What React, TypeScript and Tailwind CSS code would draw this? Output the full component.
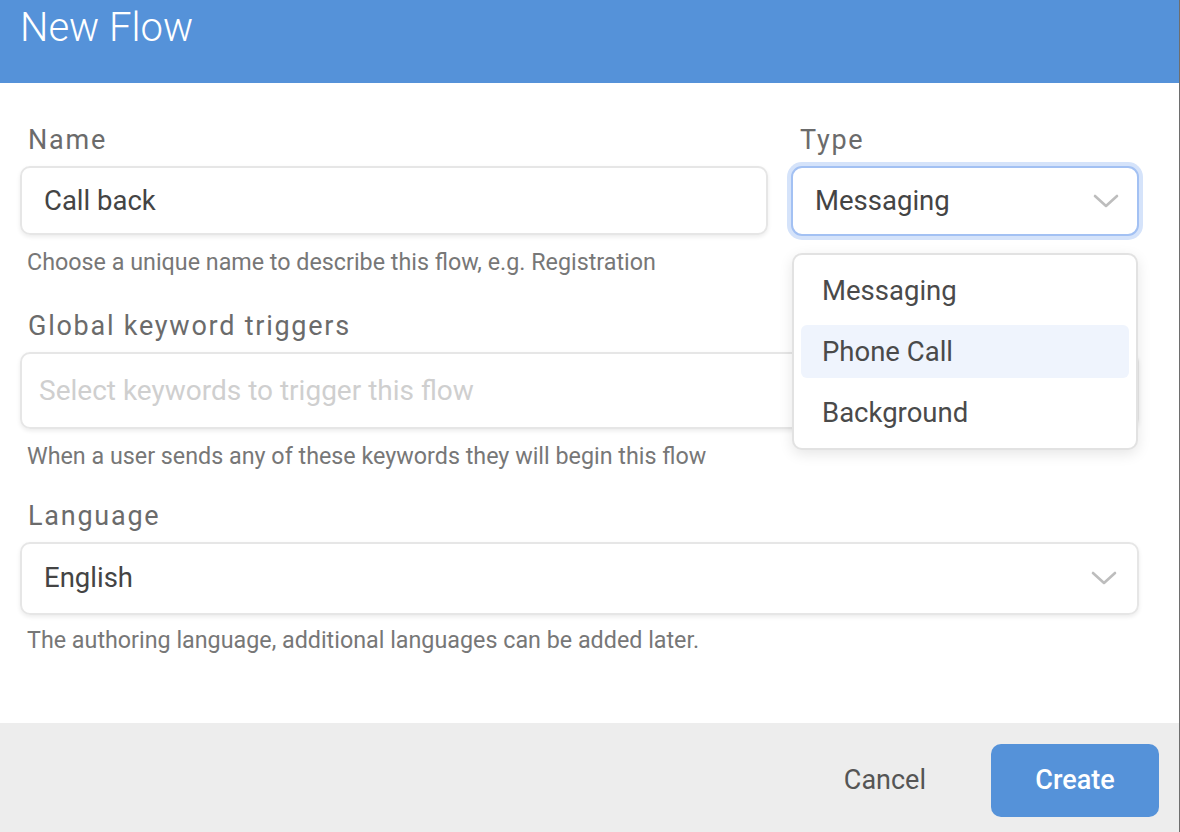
const font = { fontFamily: 'Roboto, "Liberation Sans", sans-serif' }

function Chevron() {
  return (
    <svg width="26" height="16" viewBox="0 0 26 16" fill="none">
      <polyline points="2,3 13,13 24,3" stroke="#bdbdbd" strokeWidth="2.6" strokeLinecap="round" strokeLinejoin="round" />
    </svg>
  )
}

function Label({ children }: { children: React.ReactNode }) {
  return <div className="pl-[8px] text-[27px] tracking-[0.065em] text-[#6b6b6b] leading-none">{children}</div>
}

function Help({ children }: { children: React.ReactNode }) {
  return <div className="pl-[7px] text-[23.3px] text-[#777] leading-none">{children}</div>
}

export default function App() {
  const options = ['Messaging', 'Phone Call', 'Background']
  return (
    <div className="w-[1180px] h-[832px] flex flex-col bg-white border-r border-[#6e6e6e] overflow-hidden" style={font}>
      <div className="h-[83px] shrink-0 bg-[#5592d9] pl-[20px] pt-[6px]">
        <div className="text-[40px] font-light text-white leading-[44px]">New Flow</div>
      </div>

      <div className="flex-1 px-[20px] pr-[40px] pt-[44px]">
        <div className="flex gap-[23px]">
          <div className="w-[748px] flex flex-col">
            <Label>Name</Label>
            <div className="mt-[12px] h-[69px] rounded-[10px] border-2 border-[#e6e6e6] shadow-[0_2px_4px_rgba(0,0,0,0.08)] flex items-center pl-[22px] text-[27.5px] text-[#444]">
              Call back
            </div>
            <div className="mt-[16px]">
              <Help>Choose a unique name to describe this flow, e.g. Registration</Help>
            </div>
          </div>
          <div className="flex-1 flex flex-col">
            <div className="pl-[1px]"><Label>Type</Label></div>
            <div className="relative mt-[12px]">
              <div className="h-[70px] rounded-[11px] border-2 border-[#a3c1f3] bg-white shadow-[0_0_0_4px_#d5e3fa] flex items-center justify-between pl-[22px] pr-[18px] text-[27.5px] text-[#444]">
                <span>Messaging</span>
                <Chevron />
              </div>
              <div className="absolute left-[1px] right-[1px] top-[87px] z-10 rounded-[10px] border-2 border-[#e2e2e2] bg-white shadow-[0_4px_14px_rgba(0,0,0,0.10)] px-[7px] py-[9px] flex flex-col gap-[8px]">
                {options.map((o) => (
                  <div
                    key={o}
                    className={`h-[53px] rounded-[6px] flex items-center pl-[21px] text-[27.5px] text-[#4a4a4a] ${o === 'Phone Call' ? 'bg-[#eff4fd]' : ''}`}
                  >
                    {o}
                  </div>
                ))}
              </div>
            </div>
          </div>
        </div>

        <div className="mt-[39px] flex flex-col">
          <Label>Global keyword triggers</Label>
          <div className="mt-[12px] h-[77px] rounded-[10px] border-2 border-[#e6e6e6] shadow-[0_2px_4px_rgba(0,0,0,0.08)] flex items-center pl-[17px] text-[28px] text-[#cfcfcf]">
            Select keywords to trigger this flow
          </div>
          <div className="mt-[16px]">
            <Help>When a user sends any of these keywords they will begin this flow</Help>
          </div>
        </div>

        <div className="mt-[34px] flex flex-col">
          <Label>Language</Label>
          <div className="mt-[12px] h-[73px] rounded-[10px] border-2 border-[#e6e6e6] shadow-[0_2px_4px_rgba(0,0,0,0.08)] flex items-center justify-between pl-[22px] pr-[20px] text-[27.5px] text-[#444]">
            <span>English</span>
            <Chevron />
          </div>
          <div className="mt-[14px]">
            <Help>The authoring language, additional languages can be added later.</Help>
          </div>
        </div>
      </div>

      <div className="h-[109px] shrink-0 bg-[#ededed] flex items-start justify-end pt-[21px] pr-[20px] gap-[65px]">
        <button className="h-[73px] text-[27px] text-[#555]">Cancel</button>
        <button className="w-[168px] h-[73px] rounded-[10px] bg-[#5592d9] text-white text-[27px] font-medium">Create</button>
      </div>
    </div>
  )
}
